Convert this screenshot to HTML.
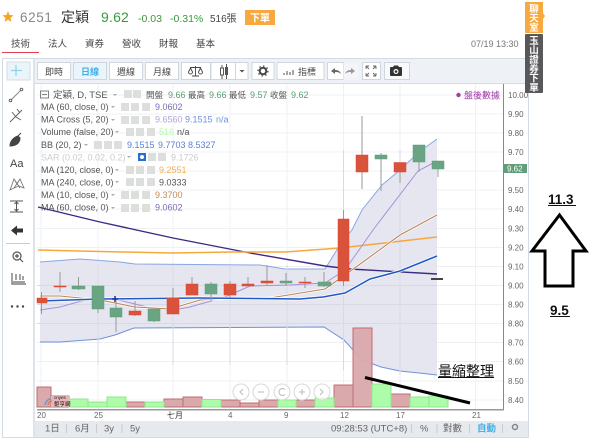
<!DOCTYPE html>
<html><head><meta charset="utf-8">
<style>
html,body{margin:0;padding:0;background:#fff;width:600px;height:448px;overflow:hidden}
svg{display:block}
text{font-family:"Liberation Sans","Noto Sans CJK TC",sans-serif}
</style></head><body>
<svg width="600" height="448" viewBox="0 0 600 448" xmlns="http://www.w3.org/2000/svg">
<rect width="600" height="448" fill="#fff"/>
<!-- header -->
<polygon points="8,11 9.6,15 13.5,15.3 10.5,18 11.5,22 8,19.8 4.5,22 5.5,18 2.5,15.3 6.4,15" fill="#f5a623"/>
<text x="20" y="22" font-size="13.5" fill="#888" letter-spacing=".6">6251</text>
<text x="61" y="22" font-size="14" fill="#333">定穎</text>
<text x="101" y="22" font-size="14" fill="#3a9a3a" letter-spacing=".2">9.62</text>
<text x="138" y="22" font-size="10.5" fill="#3a9a3a">-0.03</text>
<text x="170" y="22" font-size="10.5" fill="#3a9a3a">-0.31%</text>
<text x="210" y="22" font-size="10" fill="#444">516張</text>
<rect x="245" y="10" width="30" height="15" fill="#f7a83e"/>
<text x="260" y="21.5" font-size="10" fill="#fff" text-anchor="middle" font-weight="bold">下單</text>
<!-- tabs -->
<g font-size="9.5" fill="#444">
<text x="11" y="47">技術</text><text x="48" y="47">法人</text><text x="85" y="47">資券</text><text x="122" y="47">營收</text><text x="159" y="47">財報</text><text x="196" y="47">基本</text>
</g>
<rect x="2" y="52" width="37" height="1" fill="#e8404a"/>
<text x="471" y="47" font-size="9" fill="#777">07/19 13:30</text>
<!-- frame -->
<rect x="2.5" y="58.5" width="526" height="379" fill="#fff" stroke="#d5dbe3"/>
<rect x="3" y="59" width="30" height="378" fill="#fff"/>
<rect x="33" y="59" width="2" height="378" fill="#dfe4ea"/>
<rect x="35" y="59" width="493" height="24" fill="#eef1f6"/>
<rect x="35" y="83" width="493" height="1" fill="#d5dbe3"/>
<rect x="528" y="59" width="1" height="378" fill="#d5dbe3"/>
<!-- left toolbar -->
<rect x="7" y="62" width="23" height="18" fill="#eaf5fb" stroke="#d5dbe3"/>
<path d="M16 65v11M11 70.500h11" stroke="#8fd0ee" stroke-width="1.200"/>
<path d="M11 100L21 90" stroke="#888" stroke-width="1"/><circle cx="10.500" cy="100.500" r="1.300" fill="none" stroke="#666"/><circle cx="21.500" cy="89.500" r="1.300" fill="none" stroke="#666"/>
<path d="M10 122L22 110M12 112l4 5 5 3M17 109l3 4" stroke="#666" fill="none" stroke-width="1"/>
<path d="M10 146c0-5 4-9 8-10l2 2c0 5-4 8-10 8zM18 136l3-3" fill="#444" stroke="#444" stroke-width="1"/>
<text x="10" y="167" font-size="11" fill="#444">Aa</text>
<path d="M10 190l4-11 3 5 3-5 4 9-5-2-5 2zM14 179l6 9M20 179l-6 9" fill="none" stroke="#777" stroke-width=".9"/>
<path d="M10 201h13M10 212h13M16.500 202v9M14.500 204l2-2 2 2M14.500 209l2 2 2-2" fill="none" stroke="#555" stroke-width="1"/>
<path d="M11 230.500l6-5v3h6v4h-6v3z" fill="#333"/>
<rect x="6" y="243" width="24" height="1" fill="#ccc"/>
<circle cx="17" cy="256" r="4" fill="none" stroke="#555" stroke-width="1.200"/><path d="M20 259l3 3M15 256h4M17 254v4" stroke="#555" stroke-width="1.200"/>
<path d="M12 273v11h14M16 280v-6M20 280v-6M23 280v-4M13 282h12" fill="none" stroke="#666" stroke-width="1.200"/>
<circle cx="12" cy="306.500" r="1.200" fill="#444"/><circle cx="17.500" cy="306.500" r="1.200" fill="#444"/><circle cx="23" cy="306.500" r="1.200" fill="#444"/>
<!-- toolbar buttons -->
<g fill="#fff" stroke="#cfd6de">
<rect x="37.500" y="62.500" width="33" height="17"/>
<rect x="73.500" y="62.500" width="33" height="17" fill="#eaf5fb"/>
<rect x="109.500" y="62.500" width="33" height="17"/>
<rect x="145.500" y="62.500" width="33" height="17"/>
<rect x="181.500" y="62.500" width="29" height="17"/>
<rect x="211" y="62.500" width="37" height="17"/>
<rect x="252" y="62.500" width="22" height="17"/>
<rect x="277" y="62.500" width="47" height="17"/>
<rect x="327.500" y="62.500" width="16" height="17"/>
<rect x="343.500" y="62.500" width="15" height="17" fill="#f3f5f8" stroke="none"/>
<rect x="362.500" y="62.500" width="18" height="17"/>
<rect x="384.500" y="62.500" width="25" height="17" fill="#f7f9fb"/>
</g>
<g font-size="9" text-anchor="middle" fill="#444">
<text x="54" y="75">即時</text><text x="90" y="75" fill="#3fb0e8" font-weight="bold">日線</text><text x="126" y="75">週線</text><text x="162" y="75">月線</text>
</g>
<path d="M190 67.500h11M195.500 66v10M192 76h7M190.500 68l-2 4a2 2 0 0 0 4 0zM200.500 68l-2 4a2 2 0 0 0 4 0z" fill="none" stroke="#444" stroke-width=".9"/>
<path d="M222 65v14M226.500 64v15" stroke="#555"/><rect x="220.500" y="68" width="3" height="7" fill="#fff" stroke="#555"/><rect x="225" y="67" width="3" height="8" fill="#555"/>
<path d="M235.500 62.500v17" stroke="#cfd6de"/><path d="M239.500 70h5l-2.500 2.500z" fill="#555"/>
<circle cx="263" cy="71" r="3.300" fill="none" stroke="#444" stroke-width="2"/><circle cx="263" cy="71" r="5" fill="none" stroke="#444" stroke-width="1.200" stroke-dasharray="1.500 2.400"/>
<path d="M284 75v-2M287 75v-4M290 75v-3M293 75v-5" stroke="#888" stroke-width="1.500"/>
<text x="298" y="75" font-size="9" fill="#444">指標</text>
<path d="M331 71l4-3v2c3 0 5 1 6 4-2-2-4-2-6-2v2z" fill="#666"/>
<path d="M355 71l-4-3v2c-3 0-5 1-6 4 2-2 4-2 6-2v2z" fill="#999"/>
<path d="M366 66h3M366 66v3M376 66h-3M376 66v3M366 76h3M366 76v-3M376 76h-3M376 76v-3M366 66l3 3M376 66l-3 3M366 76l3-3M376 76l-3-3" stroke="#666" stroke-width=".9" fill="none"/>
<path d="M391 67h2l1-1.500h4l1 1.500h2a1 1 0 0 1 1 1v7a1 1 0 0 1-1 1h-10a1 1 0 0 1-1-1v-7a1 1 0 0 1 1-1z" fill="#333"/><circle cx="396" cy="71.500" r="2.500" fill="#fff"/><circle cx="396" cy="71.500" r="1.300" fill="#333"/>
<!-- chart grid -->
<g stroke="#eef0f3" stroke-width="1">
<path d="M37 95h466M37 114h466M37 133h466M37 152h466M37 171h466M37 190h466M37 209h466M37 228.500h466M37 247.500h466M37 266.500h466M37 285.500h466M37 304.500h466M37 323.500h466M37 342.500h466M37 361.500h466M37 381h466M37 400h466"/>
<path d="M41 84v325M98 84v325M173 84v325M230 84v325M287 84v325M343.500 84v325M400 84v325M475.500 84v325"/>
</g>
<!-- BB area -->
<path d="M40 262L80 259L120 262L135 264L260 265L285 269L325 269L343 240L352 230L362 210L382 185L400 170L419 152L437 139V375L419 373L400 371L381 367L362 360L344 340L324 327L134 328L115 335L100 339L60 342L40 342Z" fill="#e6e6f0"/>
<path d="M40 262L80 259L120 262L135 264L260 265L285 269L325 269L343 240L352 230L362 210L382 185L400 170L419 152L437 139" fill="none" stroke="#8aa6e2" stroke-width="1"/>
<path d="M40 342L60 342L100 339L115 335L134 328L324 327L344 340L362 360L381 367L400 371L419 373L437 375" fill="none" stroke="#6f92dc" stroke-width="1"/>
<g stroke="#d8d9e4" stroke-width="1"><path d="M37 285.500h400M37 304.500h400M37 323.500h400M98 265v100M173 265v100M230 265v100M287 265v100M343.500 150v220M400 150v225"/></g>
<!-- lines -->
<path d="M38 207L100 222L173 238L250 253L325 266L350 269L437 274" fill="none" stroke="#3d2a85" stroke-width="1.400"/>
<path d="M38 250L100 251.500L173 253L230 252L285 252L340 248L437 237" fill="none" stroke="#f5a83c" stroke-width="1.500"/>
<path d="M40 310L60 307L85 300L115 299L135 304L155 309L173 310L190 307L225 297L250 286L290 285L325 283L345 270L373 230L418 171L437 161" fill="none" stroke="#a792d8" stroke-width="1"/>
<path d="M40 296L60 296L100 300L135 307L170 309L200 300L240 298L270 298L325 289L345 275L400 235L437 215" fill="none" stroke="#fff" stroke-width="2.500"/>
<path d="M40 296L60 296L100 300L135 307L170 309L200 300L240 298L270 298L325 289L345 275L400 235L437 215" fill="none" stroke="#bb8458" stroke-width="1.100"/>
<path d="M40 301L100 299L200 298L300 299L323 297L345 293L370 279L400 271L437 256" fill="none" stroke="#fff" stroke-width="3"/>
<path d="M40 301L100 299L200 298L300 299L323 297L345 293L370 279L400 271L437 256" fill="none" stroke="#2159c4" stroke-width="1.500"/>
<path d="M112 299h6M115 296v6" stroke="#1b2f9c" stroke-width="1.500"/>
<!-- wicks -->
<g stroke="#999" stroke-width="1" fill="none">
<path d="M41.500 292v22M60 272v20M78.500 277v13M98 286v27M116 300v32M135 301v15M154 309v13M173 288v26M192 277v7M211 282v19M230 281v17M248 277v7M267 265v20M286 273v13M305 277v11M324 272v15M343.500 210v76M362 116v73M381 153v38M400 172v11M419 162v10M438 169v8"/>
</g>
<!-- candles -->
<g fill="#d9533c" stroke="#e2402c" stroke-width=".5">
<rect x="37" y="298" width="10" height="5"/><rect x="54" y="286" width="12" height="1"/><rect x="129" y="311" width="12" height="4"/><rect x="167" y="298" width="12" height="16"/><rect x="186" y="284" width="12" height="11"/><rect x="224" y="284" width="12" height="11"/><rect x="242" y="284" width="12" height="2"/><rect x="261" y="281" width="12" height="2"/><rect x="299" y="282" width="12" height="1"/><rect x="338" y="219" width="11" height="62"/><rect x="356" y="155" width="12" height="17"/><rect x="394" y="162.500" width="12" height="9.500"/>
</g>
<g fill="#69a583" stroke="#5c9c78" stroke-width=".5">
<rect x="72" y="286" width="13" height="3"/><rect x="92" y="286" width="12" height="23"/><rect x="110" y="308" width="12" height="9"/><rect x="148" y="309" width="12" height="12"/><rect x="205" y="284" width="12" height="10"/><rect x="280" y="281" width="12" height="2"/><rect x="318" y="282" width="13" height="4"/><rect x="375" y="155" width="12" height="4"/><rect x="413" y="145" width="12" height="17"/><rect x="432" y="161" width="12" height="8"/>
</g>
<rect x="431" y="278" width="12" height="2" fill="#444"/>
<!-- volume -->
<g fill="#d9a9ac" stroke="#c06d72" stroke-width="1">
<rect x="37" y="387" width="14" height="20"/><rect x="51" y="396" width="18" height="11"/><rect x="126" y="402" width="19" height="5"/><rect x="164" y="399" width="19" height="8"/><rect x="183" y="397" width="19" height="10"/><rect x="221" y="400" width="19" height="7"/><rect x="240" y="403" width="19" height="4"/><rect x="259" y="400" width="19" height="7"/><rect x="296" y="400" width="19" height="7"/><rect x="334" y="385" width="19" height="22"/>
<rect x="353" y="328" width="19" height="79" fill-opacity=".95"/><rect x="391" y="394" width="19" height="13"/>
</g>
<g fill="#adfca9" stroke="#8ee88a" stroke-width="1">
<rect x="69" y="399" width="19" height="8"/><rect x="88" y="402" width="19" height="5"/><rect x="107" y="397" width="19" height="10"/><rect x="145" y="402" width="19" height="5"/><rect x="202" y="399.500" width="19" height="7.500"/><rect x="278" y="400" width="18" height="7"/><rect x="315" y="398" width="19" height="9"/><rect x="372" y="384" width="19" height="23"/><rect x="410" y="397" width="19" height="10"/><rect x="429" y="396" width="19" height="11"/>
</g>
<!-- volume logo -->
<rect x="51" y="396" width="18" height="11" fill="#e7b5b8"/>
<path d="M45 405c1-4 3-6 6-6" fill="none" stroke="#4aa0d8" stroke-width="1.200"/><path d="M48 405c0-2 2-4 4-4" fill="none" stroke="#e8703a" stroke-width="1.200"/>
<text x="54" y="399" font-size="4.500" fill="#111">cnyes</text>
<text x="54" y="406" font-size="5.500" fill="#111">鉅亨網</text>
<!-- zoom circles -->
<g fill="#fff" fill-opacity=".75" stroke="#d8d8d8"><circle cx="241" cy="392" r="8"/><circle cx="261" cy="392" r="8"/><circle cx="282" cy="392" r="8"/><circle cx="302" cy="392" r="8"/><circle cx="322" cy="392" r="8"/></g>
<g fill="none" stroke="#bbb"><path d="M243 389l-3 3 3 3M258 392h6M285 389.500a3.500 3.500 0 1 0 0 5M299 392h6M302 389v6M320 389l3 3-3 3"/></g>
<!-- annotation line -->
<path d="M365 377.500L470 403" stroke="#000" stroke-width="3"/>
<text x="438" y="376" font-size="14" fill="#111">量縮整理</text>
<rect x="438" y="377" width="56" height="1" fill="#111"/>
<!-- legend -->
<rect x="40.500" y="91" width="8" height="7" fill="none" stroke="#666" stroke-width=".8"/><path d="M42 94.500h5" stroke="#666" stroke-width=".8"/>
<g font-size="9" fill="#555">
<text x="53" y="98" font-size="9.500">定穎, D, TSE</text>
<text x="146" y="98" font-size="8.500">開盤</text><text x="168" y="98" fill="#5a9c72">9.66</text>
<text x="188" y="98" font-size="8.500">最高</text><text x="209" y="98" fill="#5a9c72">9.66</text>
<text x="229" y="98" font-size="8.500">最低</text><text x="250" y="98" fill="#5a9c72">9.57</text>
<text x="270" y="98" font-size="8.500">收盤</text><text x="291" y="98" fill="#5a9c72">9.62</text>
<text x="41" y="110">MA (60, close, 0)</text>
<text x="41" y="122.500">MA Cross (5, 20)</text>
<text x="41" y="135">Volume (false, 20)</text>
<text x="41" y="148">BB (20, 2)</text>
<text x="41" y="160.500" fill="#ccc">SAR (0.02, 0.02, 0.2)</text>
<text x="41" y="173">MA (120, close, 0)</text>
<text x="41" y="185.500">MA (240, close, 0)</text>
<text x="41" y="198">MA (10, close, 0)</text>
<text x="41" y="210.500">MA (60, close, 0)</text>
<text x="155" y="110" fill="#7a6cb8">9.0602</text>
<text x="155" y="122.500" fill="#b1a4dc">9.6560</text><text x="185" y="122.500" fill="#6f92dc">9.1515</text><text x="216" y="122.500" fill="#6f92dc">n/a</text>
<text x="159" y="135" fill="#adfca9">516</text><text x="177" y="135">n/a</text>
<text x="127" y="148" fill="#5a80d8">9.1515</text><text x="158" y="148" fill="#5a80d8">9.7703</text><text x="188" y="148" fill="#5a80d8">8.5327</text>
<text x="171" y="160.500" fill="#ccc">9.1726</text>
<text x="159" y="173" fill="#f5b04c">9.2551</text>
<text x="159" y="185.500">9.0333</text>
<text x="155" y="198" fill="#c48c5c">9.3700</text>
<text x="155" y="210.500" fill="#7a6cb8">9.0602</text>
</g>
<!-- legend dropdown arrows -->
<g fill="#aaa">
<path d="M113 94h4l-2 2zM111 106h4l-2 2zM111 119h4l-2 2zM115 131h4l-2 2zM84 144h4l-2 2zM127 156h4l-2 2zM115 169h4l-2 2zM115 181h4l-2 2zM111 194h4l-2 2zM111 207h4l-2 2z"/>
</g>
<!-- legend icons -->
<g fill="#dcdfdc">
<rect x="124" y="90" width="8" height="8"/><rect x="133" y="90" width="8" height="8"/>
<rect x="121" y="103" width="8" height="8"/><rect x="131" y="103" width="8" height="8"/><rect x="142" y="103" width="8" height="8"/>
<rect x="121" y="116" width="8" height="8"/><rect x="131" y="116" width="8" height="8"/><rect x="142" y="116" width="8" height="8"/>
<rect x="126" y="128" width="8" height="8"/><rect x="136" y="128" width="8" height="8"/><rect x="147" y="128" width="8" height="8"/>
<rect x="94" y="141" width="8" height="8"/><rect x="104" y="141" width="8" height="8"/><rect x="114" y="141" width="8" height="8"/>
<rect x="148" y="153" width="8" height="8"/><rect x="158" y="153" width="8" height="8"/>
<rect x="126" y="166" width="8" height="8"/><rect x="136" y="166" width="8" height="8"/><rect x="147" y="166" width="8" height="8"/>
<rect x="126" y="178" width="8" height="8"/><rect x="136" y="178" width="8" height="8"/><rect x="147" y="178" width="8" height="8"/>
<rect x="121" y="191" width="8" height="8"/><rect x="131" y="191" width="8" height="8"/><rect x="142" y="191" width="8" height="8"/>
<rect x="121" y="204" width="8" height="8"/><rect x="131" y="204" width="8" height="8"/><rect x="142" y="204" width="8" height="8"/>
</g>
<rect x="138" y="153" width="8" height="8" fill="#2a6fd0"/><circle cx="142" cy="157" r="2" fill="#fff"/>
<!-- post-market -->
<circle cx="458.500" cy="95" r="2.200" fill="#a23aa8"/>
<text x="464" y="98.500" font-size="9" fill="#a23aa8">盤後數據</text>
<!-- axis -->
<rect x="503" y="84" width="1" height="326" fill="#888"/>
<rect x="37" y="409" width="467" height="1.500" fill="#999"/>
<g font-size="8" fill="#666">
<text x="508" y="98">10.00</text><text x="508" y="117">9.90</text><text x="508" y="136">9.80</text><text x="508" y="155">9.70</text>
<text x="508" y="193">9.50</text><text x="508" y="212">9.40</text><text x="508" y="231.500">9.30</text><text x="508" y="250.500">9.20</text><text x="508" y="269.500">9.10</text><text x="508" y="288.500">9.00</text><text x="508" y="307.500">8.90</text><text x="508" y="326.500">8.80</text><text x="508" y="345.500">8.70</text><text x="508" y="364.500">8.60</text><text x="508" y="384">8.50</text><text x="508" y="403">8.40</text>
</g>
<rect x="503" y="164" width="24" height="9" fill="#5f9e78"/>
<text x="507" y="171.500" font-size="8" fill="#fff">9.62</text>
<g font-size="8" fill="#666">
<text x="37" y="418">20</text><text x="94" y="418">25</text><text x="167" y="418" fill="#333">七月</text><text x="228" y="418">4</text><text x="284" y="418">9</text><text x="340" y="418">12</text><text x="396" y="418">17</text><text x="472" y="418">21</text>
</g>
<!-- bottom bar -->
<rect x="35" y="421" width="493" height="16" fill="#e6e9ed"/>
<g font-size="9.500" fill="#666">
<text x="45" y="431.500">1日</text><text x="75" y="431.500">6月</text><text x="104" y="431.500">3y</text><text x="130" y="431.500">5y</text>
<text x="331" y="431.500">09:28:53 (UTC+8)</text><text x="420" y="431.500">%</text><text x="443" y="431.500">對數</text><text x="477" y="431.500" fill="#3fb0e8" font-weight="bold">自動</text>
</g>
<path d="M66.500 424v9M96.500 424v9M122 424v9M411.500 424v9M437 424v9M469.500 424v9M502.500 424v9" stroke="#ccc"/>
<circle cx="515" cy="427" r="2.500" fill="none" stroke="#888" stroke-width="1.500"/>
<!-- right banner -->
<rect x="525" y="2" width="18" height="31" fill="#f7a83e"/>
<rect x="525" y="34" width="18" height="59" rx="1" fill="#58585a"/>
<path d="M543 13l2 3-2 3z" fill="#f7a83e"/>
<g font-size="9.500" fill="#fff" text-anchor="middle" font-weight="bold">
<text x="534" y="12">聊</text><text x="534" y="21.500">天</text><text x="534" y="31">室</text>
<text x="534" y="44">玉</text><text x="534" y="53.500">山</text><text x="534" y="63">證</text><text x="534" y="72.500">券</text><text x="534" y="81.500">下</text><text x="534" y="91">單</text>
</g>
<!-- arrow -->
<text x="548" y="204" font-size="13.500" fill="#111" font-weight="bold">11.3</text>
<rect x="548" y="205" width="28" height="1" fill="#111"/>
<polygon points="559.500,215 586,251 573,251 573,286 545,286 545,251 532,251" fill="#fff" stroke="#000" stroke-width="3"/>
<text x="550" y="315" font-size="13.500" fill="#111" font-weight="bold">9.5</text>
<rect x="550" y="316" width="20" height="1" fill="#111"/>
</svg>
</body></html>
